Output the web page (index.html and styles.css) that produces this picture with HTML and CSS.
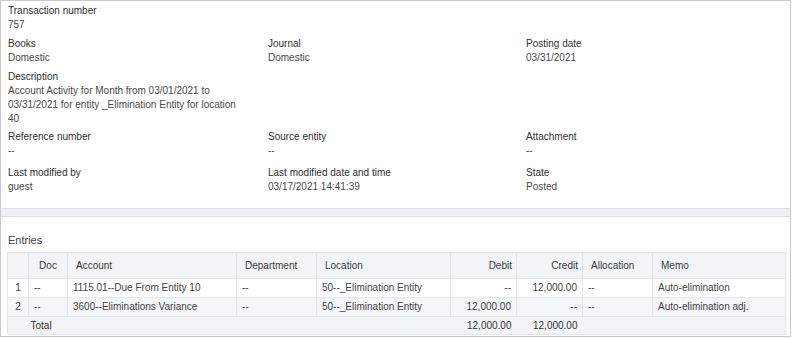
FILE: index.html
```html
<!DOCTYPE html>
<html lang="en">
<head>
<meta charset="utf-8">
<title>Transaction 757</title>
<link rel="stylesheet" href="styles.css">
</head>
<body>
<div class="page">
  <section class="details">
    <div class="field row-gap">
      <div class="label">Transaction number</div>
      <div class="value">757</div>
    </div>
    <div class="grid row-gap">
      <div class="field"><div class="label">Books</div><div class="value">Domestic</div></div>
      <div class="field"><div class="label">Journal</div><div class="value">Domestic</div></div>
      <div class="field"><div class="label">Posting date</div><div class="value">03/31/2021</div></div>
    </div>
    <div class="field desc-gap">
      <div class="label">Description</div>
      <div class="value desc">Account Activity for Month from 03/01/2021 to 03/31/2021 for entity _Elimination Entity for location 40</div>
    </div>
    <div class="grid ref-gap">
      <div class="field"><div class="label">Reference number</div><div class="value">--</div></div>
      <div class="field"><div class="label">Source entity</div><div class="value">--</div></div>
      <div class="field"><div class="label">Attachment</div><div class="value">--</div></div>
    </div>
    <div class="grid">
      <div class="field"><div class="label">Last modified by</div><div class="value">guest</div></div>
      <div class="field"><div class="label">Last modified date and time</div><div class="value">03/17/2021 14:41:39</div></div>
      <div class="field"><div class="label">State</div><div class="value">Posted</div></div>
    </div>
  </section>
  <div class="band"></div>
  <section class="entries">
    <h2 class="title">Entries</h2>
    <table class="table">
      <colgroup>
        <col class="c-num"><col class="c-doc"><col class="c-acct"><col class="c-dept"><col class="c-loc"><col class="c-debit"><col class="c-credit"><col class="c-alloc"><col class="c-memo">
      </colgroup>
      <thead>
        <tr>
          <th></th>
          <th class="center">Doc</th>
          <th>Account</th>
          <th>Department</th>
          <th>Location</th>
          <th class="num">Debit</th>
          <th class="num">Credit</th>
          <th>Allocation</th>
          <th>Memo</th>
        </tr>
      </thead>
      <tbody>
        <tr>
          <td class="center">1</td>
          <td>--</td>
          <td>1115.01--Due From Entity 10</td>
          <td>--</td>
          <td>50--_Elimination Entity</td>
          <td class="num">--</td>
          <td class="num">12,000.00</td>
          <td>--</td>
          <td>Auto-elimination</td>
        </tr>
        <tr class="alt">
          <td class="center">2</td>
          <td>--</td>
          <td>3600--Eliminations Variance</td>
          <td>--</td>
          <td>50--_Elimination Entity</td>
          <td class="num">12,000.00</td>
          <td class="num">--</td>
          <td>--</td>
          <td>Auto-elimination adj.</td>
        </tr>
        <tr class="total">
          <td></td>
          <td class="total-label">Total</td>
          <td></td>
          <td></td>
          <td></td>
          <td class="num">12,000.00</td>
          <td class="num">12,000.00</td>
          <td></td>
          <td></td>
        </tr>
      </tbody>
    </table>
  </section>
</div>
</body>
</html>
```

FILE: styles.css
```css
* { box-sizing: border-box; }

html, body {
  margin: 0;
  padding: 0;
  background: #ffffff;
}

body {
  font-family: "Liberation Sans", Arial, Helvetica, sans-serif;
  font-size: 10px;
  line-height: 14px;
  color: #444;
}

.page {
  width: 791px;
  height: 337px;
  border: 1px solid #c9c9c9;
  overflow: hidden;
}

.details {
  padding: 3px 7px 14px 7px;
}

.grid {
  display: grid;
  grid-template-columns: 260px 258px 1fr;
}

.row-gap { margin-bottom: 5px; }
.desc-gap { margin-bottom: 4px; }
.ref-gap { margin-bottom: 8px; }

.label {
  color: #2f2f2f;
}

.value {
  color: #4a4a4a;
}

.desc {
  max-width: 236px;
}

.band {
  height: 9px;
  background: #eff1f3;
  border-top: 1px solid #dcdfe3;
  border-bottom: 1px solid #dcdfe3;
}

.entries {
  padding: 16px 6px 0 6px;
}

.title {
  margin: 0 0 5px 1px;
  font-size: 11px;
  font-weight: normal;
  line-height: 14px;
  color: #444;
}

.table {
  width: 778px;
  border-collapse: collapse;
  table-layout: fixed;
  border: 1px solid #e0e3e6;
}

.c-num { width: 21px; }
.c-doc { width: 39px; }
.c-acct { width: 169px; }
.c-dept { width: 80px; }
.c-loc { width: 134px; }
.c-debit { width: 66px; }
.c-credit { width: 66px; }
.c-alloc { width: 70px; }
.c-memo { width: 133px; }

.table th {
  height: 26px;
  background: #f3f4f6;
  font-weight: normal;
  color: #3a3a3a;
  text-align: left;
  padding: 0 5px 0 8px;
  border: 1px solid #e0e3e6;
  white-space: nowrap;
}

.table td {
  height: 19px;
  padding: 0 5px 0 5px;
  color: #444;
  border: 1px solid #e3e6e9;
  white-space: nowrap;
  overflow: hidden;
}

.table .num {
  text-align: right;
  padding-right: 4px;
}

.table td.num { padding-right: 5px; }

.table .center {
  text-align: center;
  padding-left: 0;
  padding-right: 0;
}

.table tr.alt td {
  background: #f5f6f8;
}

.table tr.total td {
  height: 18px;
  background: #f3f4f6;
  border-left: none;
  border-right: none;
  color: #333;
}

.table td.total-label {
  padding-left: 2px;
}
```
